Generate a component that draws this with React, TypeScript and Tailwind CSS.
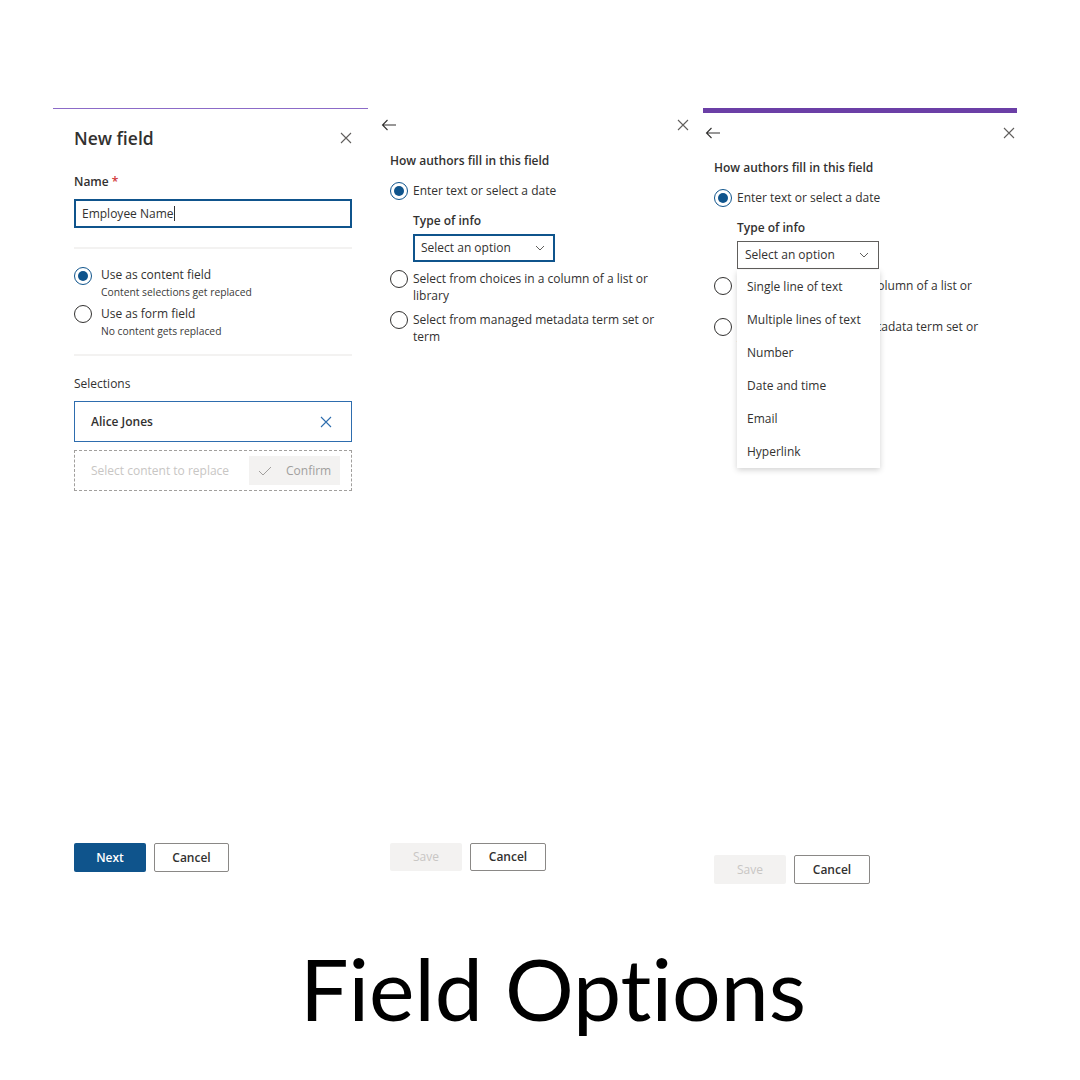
import React from 'react';

const txt = 'text-[#323130]';

function CloseIcon({ className = '' }: { className?: string }) {
  return (
    <svg width="12" height="12" viewBox="0 0 12 12" className={className}>
      <path d="M1 1 L11 11 M11 1 L1 11" stroke="currentColor" strokeWidth="1.1" fill="none" />
    </svg>
  );
}

function BackArrow() {
  return (
    <svg width="16" height="12" viewBox="0 0 16 12" className="text-[#323130]">
      <path d="M15 6 H1.5 M6.5 1 L1.5 6 L6.5 11" stroke="currentColor" strokeWidth="1.1" fill="none" />
    </svg>
  );
}

function Chevron() {
  return (
    <svg width="10" height="6" viewBox="0 0 10 6" className="text-[#605e5c]">
      <path d="M1 1 L5 5 L9 1" stroke="currentColor" strokeWidth="1" fill="none" />
    </svg>
  );
}

function Radio({ checked }: { checked?: boolean }) {
  return (
    <div
      className={
        'w-[18px] h-[18px] shrink-0 rounded-full border flex items-center justify-center bg-white ' +
        (checked ? 'border-[#0f548c]' : 'border-[#323130]')
      }
    >
      {checked && <div className="w-[10px] h-[10px] rounded-full bg-[#0f548c]" />}
    </div>
  );
}

function LeftPanel() {
  return (
    <div className="w-[315px] h-[764px] flex flex-col border-t border-[#8c6bc8] pl-[21px] pr-[16px]">
      <div className="flex items-center justify-between mt-[15px] h-[28px]">
        <div className={'text-[17.5px] font-semibold ' + txt}>New field</div>
        <CloseIcon className="text-[#605e5c]" />
      </div>
      <div className={'mt-[21px] text-[12px] leading-[18px] font-semibold ' + txt}>
        Name <span className="text-[#d13438]">*</span>
      </div>
      <div className={'mt-[8px] h-[29px] border-2 border-[#0f548c] flex items-center px-[6px] text-[12px] ' + txt}>
        Employee Name<span className="w-px h-[15px] bg-[#323130]" />
      </div>
      <div className="mt-[19px] h-[2px] bg-[#f3f2f1]" />
      <div className="mt-[17px] flex gap-[9px]">
        <div className="pt-[1px]"><Radio checked /></div>
        <div className="flex flex-col">
          <span className={'text-[12px] leading-[18px] ' + txt}>Use as content field</span>
          <span className="text-[10.3px] leading-[16px] text-[#3b3a39]">Content selections get replaced</span>
        </div>
      </div>
      <div className="mt-[5px] flex gap-[9px]">
        <div><Radio /></div>
        <div className="flex flex-col">
          <span className={'text-[12px] leading-[18px] ' + txt}>Use as form field</span>
          <span className="text-[10.3px] leading-[16px] text-[#3b3a39]">No content gets replaced</span>
        </div>
      </div>
      <div className="mt-[15px] h-[2px] bg-[#f3f2f1]" />
      <div className={'mt-[19px] text-[12px] leading-[18px] font-medium ' + txt}>Selections</div>
      <div className="mt-[8px] h-[41px] border border-[#2e6dae] flex items-center justify-between pl-[16px] pr-[19px]">
        <span className={'text-[12px] font-semibold ' + txt}>Alice Jones</span>
        <CloseIcon className="text-[#2e6dae]" />
      </div>
      <div className="mt-[8px] h-[41px] border border-dashed border-[#a19f9d] flex items-center justify-between pl-[16px] pr-[11px]">
        <span className="text-[12px] text-[#c8c6c4]">Select content to replace</span>
        <div className="w-[91px] h-[29px] bg-[#f3f2f1] flex items-center gap-[14px] pl-[9px]">
          <svg width="14" height="10" viewBox="0 0 14 10" className="text-[#a19f9d]">
            <path d="M1 5 L5 9 L13 1" stroke="currentColor" strokeWidth="1" fill="none" />
          </svg>
          <span className="text-[12px] font-medium text-[#a19f9d]">Confirm</span>
        </div>
      </div>
      <div className="mt-auto flex gap-[8px]">
        <div className="w-[72px] h-[29px] rounded-[2px] bg-[#0f548c] flex items-center justify-center text-white text-[12px] font-semibold">
          Next
        </div>
        <div className={'w-[75px] h-[29px] rounded-[2px] border border-[#8a8886] flex items-center justify-center text-[12px] font-semibold ' + txt}>
          Cancel
        </div>
      </div>
    </div>
  );
}

function FillOptions({ open }: { open?: boolean }) {
  const items = ['Single line of text', 'Multiple lines of text', 'Number', 'Date and time', 'Email', 'Hyperlink'];
  return (
    <div className="flex flex-col">
      <div className={'text-[12px] leading-[18px] font-semibold ' + txt}>How authors fill in this field</div>
      <div className="mt-[12px] flex items-center gap-[5px]">
        <Radio checked />
        <span className={'text-[12px] leading-[18px] ' + txt}>Enter text or select a date</span>
      </div>
      <div className="pl-[23px] flex flex-col">
        <div className={'mt-[12px] text-[12px] leading-[18px] font-semibold ' + txt}>Type of info</div>
        <div className="relative mt-[4px]">
          <div
            className={
              'w-[142px] h-[28px] flex items-center justify-between ' +
              (open ? 'border border-[#605e5c] pl-[7px] pr-[9px]' : 'border-2 border-[#0f548c] pl-[6px] pr-[8px]')
            }
          >
            <span className={'text-[12px] ' + txt}>Select an option</span>
            <Chevron />
          </div>
          {open && (
            <div className="absolute left-0 top-[29px] w-[143px] bg-white shadow-[0_2px_6px_rgba(0,0,0,0.18)] z-10 flex flex-col">
              {items.map((it) => (
                <div key={it} className={'h-[33px] flex items-center pl-[10px] text-[12px] ' + txt}>
                  {it}
                </div>
              ))}
            </div>
          )}
        </div>
      </div>
      <div className="mt-[8px] flex gap-[5px]">
        <Radio />
        <span className={'text-[12px] leading-[17px] ' + txt}>
          Select from choices in a column of a list or
          <br />
          library
        </span>
      </div>
      <div className="mt-[7px] flex gap-[5px]">
        <Radio />
        <span className={'text-[12px] leading-[17px] ' + txt}>
          Select from managed metadata term set or
          <br />
          term
        </span>
      </div>
    </div>
  );
}

function Buttons({ h }: { h: string }) {
  return (
    <div className="mt-auto flex gap-[8px]">
      <div className={'w-[72px] rounded-[2px] bg-[#f3f2f1] flex items-center justify-center text-[12px] text-[#c8c6c4] ' + h}>
        Save
      </div>
      <div className={'w-[76px] rounded-[2px] border border-[#8a8886] flex items-center justify-center text-[12px] font-semibold ' + txt + ' ' + h}>
        Cancel
      </div>
    </div>
  );
}

function MiddlePanel() {
  return (
    <div className="w-[320px] h-[763px] flex flex-col">
      <div className="h-[34px] flex items-center justify-between pl-[11px] pr-[1px]">
        <BackArrow />
        <CloseIcon className="text-[#605e5c]" />
      </div>
      <div className="mt-[10px] pl-[20px]">
        <FillOptions />
      </div>
      <div className="pl-[20px] mt-auto">
        <Buttons h="h-[28px]" />
      </div>
    </div>
  );
}

function RightPanel() {
  return (
    <div className="w-[314px] h-[776px] flex flex-col">
      <div className="h-[5px] bg-[#6b3fa6]" />
      <div className="h-[37px] flex items-center justify-between pl-[2px] pr-[2px] pt-[2px]">
        <BackArrow />
        <CloseIcon className="text-[#605e5c]" />
      </div>
      <div className="mt-[9px] pl-[11px]">
        <FillOptions open />
      </div>
      <div className="pl-[11px] mt-auto">
        <Buttons h="h-[29px]" />
      </div>
    </div>
  );
}

export default function App() {
  return (
    <div className="w-[1080px] h-[1080px] bg-white overflow-hidden font-['Open_Sans',sans-serif]">
      <div className="flex items-start pt-[108px] pl-[53px]">
        <LeftPanel />
        <div className="w-[2px]" />
        <MiddlePanel />
        <div className="w-[13px]" />
        <RightPanel />
      </div>
      <div className="mt-[59px] pl-[26px] text-center text-[86px] leading-[89px] text-black font-['Lato',sans-serif] [font-variant-ligatures:none]">
        Field Options
      </div>
    </div>
  );
}
